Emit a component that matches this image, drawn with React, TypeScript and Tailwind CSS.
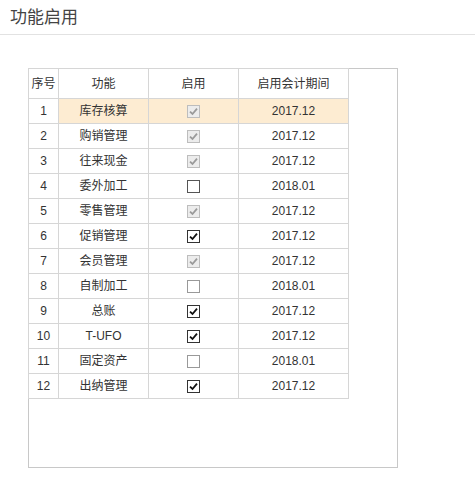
import React from 'react';

type State = 'disabled' | 'on' | 'off' | 'offLight';

interface Row {
  no: number;
  name: string;
  state: State;
  period: string;
}

const rows: Row[] = [
  { no: 1, name: '库存核算', state: 'disabled', period: '2017.12' },
  { no: 2, name: '购销管理', state: 'disabled', period: '2017.12' },
  { no: 3, name: '往来现金', state: 'disabled', period: '2017.12' },
  { no: 4, name: '委外加工', state: 'off', period: '2018.01' },
  { no: 5, name: '零售管理', state: 'disabled', period: '2017.12' },
  { no: 6, name: '促销管理', state: 'on', period: '2017.12' },
  { no: 7, name: '会员管理', state: 'disabled', period: '2017.12' },
  { no: 8, name: '自制加工', state: 'offLight', period: '2018.01' },
  { no: 9, name: '总账', state: 'on', period: '2017.12' },
  { no: 10, name: 'T-UFO', state: 'on', period: '2017.12' },
  { no: 11, name: '固定资产', state: 'offLight', period: '2018.01' },
  { no: 12, name: '出纳管理', state: 'on', period: '2017.12' },
];

function Check({ state }: { state: State }) {
  if (state === 'off' || state === 'offLight') {
    return (
      <span
        className={
          'inline-block h-[13px] w-[13px] border bg-white align-middle ' +
          (state === 'off' ? 'border-[#555]' : 'border-[#999]')
        }
      />
    );
  }
  const disabled = state === 'disabled';
  return (
    <span
      className={
        'inline-flex h-[13px] w-[13px] items-center justify-center border align-middle ' +
        (disabled ? 'border-[#bdbdbd] bg-[#ececec]' : 'border-[#333] bg-white')
      }
    >
      <svg width="9" height="9" viewBox="0 0 9 9">
        <path
          d="M1 4.6 L3.5 7 L8 1.6"
          fill="none"
          stroke={disabled ? '#9a9a9a' : '#111'}
          strokeWidth="1.8"
        />
      </svg>
    </span>
  );
}

export default function App() {
  const cell = 'border border-[#d6d6d6] p-0 text-center';
  return (
    <div
      className="h-[490px] w-[475px] bg-white text-[#333]"
      style={{ fontFamily: '"Liberation Sans", "Noto Sans CJK SC", sans-serif' }}
    >
      <div className="h-[35px] border-b border-[#e2e2e2] pl-[10px] pt-[6px] text-[17px] leading-[24px] text-[#444]">
        功能启用
      </div>

      <div className="ml-[28px] mt-[33px] h-[400px] w-[370px] border border-[#c8c8c8]">
        <table className="-ml-px -mt-px border-collapse text-[12px] leading-none">
          <colgroup>
            <col className="w-[30px]" />
            <col className="w-[90px]" />
            <col className="w-[90px]" />
            <col className="w-[110px]" />
          </colgroup>
          <thead>
            <tr className="h-[30px]">
              <th className={cell + ' font-normal'}>序号</th>
              <th className={cell + ' font-normal'}>功能</th>
              <th className={cell + ' font-normal'}>启用</th>
              <th className={cell + ' font-normal'}>启用会计期间</th>
            </tr>
          </thead>
          <tbody>
            {rows.map((r) => {
              const hi = r.no === 1 ? ' bg-[#fdecd2]' : '';
              return (
                <tr key={r.no} className="h-[25px]">
                  <td className={cell}>{r.no}</td>
                  <td className={cell + hi}>{r.name}</td>
                  <td className={cell + hi}>
                    <Check state={r.state} />
                  </td>
                  <td className={cell + hi}>{r.period}</td>
                </tr>
              );
            })}
          </tbody>
        </table>
      </div>
    </div>
  );
}
